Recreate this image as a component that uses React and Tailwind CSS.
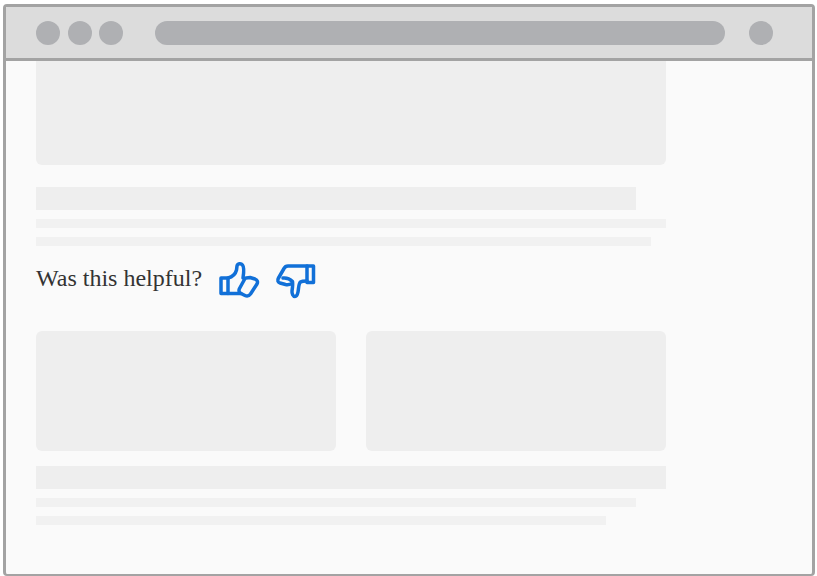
function ThumbUp() {
  return (
    <svg width="42" height="40" viewBox="0 0 42 40" fill="none" stroke="#1170d8" strokeWidth="3.500" strokeLinejoin="round" strokeLinecap="round">
      <path d="M3 17h7v15.500H3z" />
      <path d="M10 17c4-1 7.500-4 8.500-8l.5-4c.5-2.500 4-3 5.500-1 1.500 2 1.500 7 .5 13" />
      <path d="M10 32.500h13" />
      <path d="M27 17.500c1-1 3-1 5-1l5 1.500c2.500 1 3 3 2 5l-6.500 10c-1.500 2-3.500 2.500-5.500 1.500l-4-2c-2-1-2.500-3-1.500-5z" />
    </svg>
  )
}

function ThumbDown() {
  return (
    <svg width="42" height="40" viewBox="0 0 42 40" fill="none" stroke="#1170d8" strokeWidth="3.500" strokeLinejoin="round" strokeLinecap="round">
      <path d="M32 5h6.500v16.500H32z" />
      <path d="M32 5H13c-2 0-3 .5-4 2.500L3.500 17c-1.500 2.500-.5 4.500 1.500 5l5.500 1.500c2.500.5 4.500 0 6.500-1" />
      <path d="M8 17c4-.5 7 1 9.500 3.500.5 3 0 6-.5 9.500-.2 2.500 1 5.500 3 5.500s2.500-2 3-4.500c.8-4 .5-8.500 2.500-10 1.500-1 3.500-1 6.500-1" />
    </svg>
  )
}

export default function App() {
  return (
    <div className="h-[576px] w-[817px] overflow-hidden bg-white pl-[3px] pr-[2px] pt-[4px]">
      <div className="h-[572px] overflow-hidden rounded-[4px] border-[3px] border-b-2 border-[#a3a3a3] bg-[#fafafa]">
        {/* Browser bar */}
        <div className="flex h-[54px] items-center border-b-[3px] border-[#a3a3a3] bg-[#dcdcdc] pl-[30px]">
          <div className="h-6 w-6 rounded-full bg-[#afb0b3]" />
          <div className="ml-2 h-6 w-6 rounded-full bg-[#afb0b3]" />
          <div className="ml-[7px] h-6 w-6 rounded-full bg-[#afb0b3]" />
          <div className="ml-8 h-6 w-[570px] rounded-full bg-[#afb0b3]" />
          <div className="ml-6 h-6 w-6 rounded-full bg-[#afb0b3]" />
        </div>

        {/* Page */}
        <div className="w-[660px] pl-[30px]">
          <div className="h-[104px] rounded-b-md bg-[#eeeeee]" />
          <div className="mt-[22px] h-[23px] w-[600px] bg-[#eeeeee]" />
          <div className="mt-[9px] h-[9px] w-[630px] bg-[#f1f1f1]" />
          <div className="mt-[9px] h-[9px] w-[615px] bg-[#f1f1f1]" />

          <div className="mt-1 flex h-[62px] items-center">
            <span className="mb-[6px] text-2xl text-[#333333] [font-family:'Liberation_Serif',serif]">Was this helpful?</span>
            <div className="ml-4 flex gap-[15px]">
              <ThumbUp />
              <ThumbDown />
            </div>
          </div>

          <div className="mt-[19px] grid grid-cols-2 gap-[30px]">
            <div className="h-[120px] rounded-md bg-[#eeeeee]" />
            <div className="h-[120px] rounded-md bg-[#eeeeee]" />
          </div>
          <div className="mt-[15px] h-[23px] bg-[#eeeeee]" />
          <div className="mt-[9px] h-[9px] w-[600px] bg-[#f1f1f1]" />
          <div className="mt-[9px] h-[9px] w-[570px] bg-[#f1f1f1]" />
        </div>
      </div>
    </div>
  )
}
